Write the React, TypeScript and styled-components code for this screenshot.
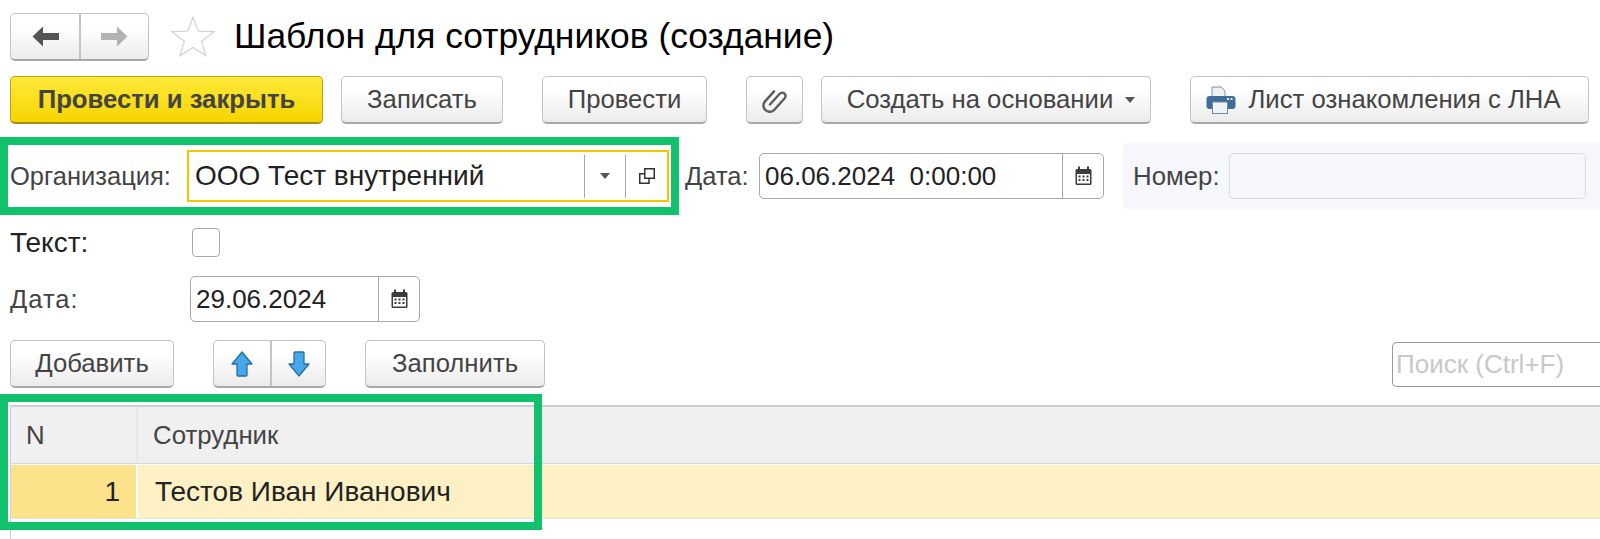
import React from "react";
import styled, { createGlobalStyle } from "styled-components";

const GlobalStyle = createGlobalStyle`
  html, body {
    margin: 0;
    padding: 0;
    background: #fff;
  }
  body {
    width: 1600px;
    height: 539px;
    overflow: hidden;
    font-family: "Liberation Sans", Arial, sans-serif;
    color: #333;
  }
`;

const Page = styled.div`
  display: flex;
  flex-direction: column;
  width: 1600px;
  height: 539px;
  overflow: hidden;
`;

const TitleRow = styled.div`
  display: flex;
  align-items: center;
  height: 47px;
  margin-top: 13px;
  padding-left: 10px;
`;

const Title = styled.h1`
  margin: 0 0 0 19px;
  font-size: 35.4px;
  font-weight: 400;
  color: #000;
  white-space: nowrap;
`;

const ButtonGroup = styled.div`
  display: flex;
  height: 48px;
  box-sizing: border-box;
  border: 1.5px solid #c4c4c4;
  border-bottom: 2px solid #a8a8a8;
  border-radius: 5px;
  background: linear-gradient(#ffffff 30%, #ebebeb);
  overflow: hidden;
`;

const GroupCell = styled.div<{ $w: number; $divided?: boolean }>`
  display: flex;
  align-items: center;
  justify-content: center;
  width: ${(p) => p.$w}px;
  border-left: ${(p) => (p.$divided ? "2px solid #c4c4c4" : "none")};
`;

const StarIcon = styled.svg`
  margin-left: 22px;
  flex: none;
`;

const ToolRow = styled.div`
  display: flex;
  gap: 39px;
  height: 48px;
  margin-top: 16px;
  padding-left: 10px;
`;

const Cluster = styled.div`
  display: flex;
  gap: 18px;
`;

const Button = styled.div<{ $w: number; $primary?: boolean; $pad?: string }>`
  display: flex;
  align-items: center;
  justify-content: center;
  gap: 12px;
  width: ${(p) => p.$w}px;
  height: 48px;
  box-sizing: border-box;
  padding: ${(p) => p.$pad || "0"};
  border: 1.5px solid ${(p) => (p.$primary ? "#c2a20c" : "#c4c4c4")};
  border-bottom: 2px solid ${(p) => (p.$primary ? "#a88c10" : "#a8a8a8")};
  border-radius: 5px;
  background: ${(p) =>
    p.$primary
      ? "linear-gradient(#ffe93a, #f5d500)"
      : "linear-gradient(#ffffff 30%, #ebebeb)"};
  font-size: 25.7px;
  font-weight: ${(p) => (p.$primary ? 700 : 400)};
  color: #444;
  white-space: nowrap;
`;

const FieldsRow = styled.div`
  display: flex;
  align-items: center;
  height: 78px;
  margin-top: 13px;
`;

const Highlight = styled.div`
  display: flex;
  align-items: center;
  width: 679px;
  height: 78px;
  box-sizing: border-box;
  border: 8px solid #11c16c;
  padding-left: 2px;
`;

const Label = styled.span<{ $w: number; $size?: number; $dark?: boolean; $spread?: number }>`
  flex: none;
  width: ${(p) => p.$w}px;
  font-size: ${(p) => p.$size || 25.5}px;
  color: ${(p) => (p.$dark ? "#222" : "#444")};
  letter-spacing: ${(p) => p.$spread || 0}px;
  white-space: nowrap;
`;

const OrgField = styled.div`
  display: flex;
  align-items: center;
  flex: 1;
  height: 52px;
  margin-right: 2px;
  box-sizing: border-box;
  border: 2px solid #f8c400;
  padding: 0 0 0 6px;
  font-size: 28px;
  color: #222;
`;

const FieldText = styled.span`
  flex: 1;
`;

const FieldButton = styled.div<{ $w: number }>`
  display: flex;
  align-items: center;
  justify-content: center;
  width: ${(p) => p.$w}px;
  height: 43px;
  border-left: 1.5px solid #a8a8a8;
`;

const DateBlock = styled.div`
  display: flex;
  align-items: center;
  margin-left: 6px;
`;

const DateField = styled.div<{ $w: number }>`
  display: flex;
  align-items: center;
  width: ${(p) => p.$w}px;
  height: 46px;
  box-sizing: border-box;
  border: 1.5px solid #a8a8a8;
  border-radius: 5px;
  padding-left: 5px;
  font-size: 26px;
  color: #222;
  white-space: pre;
`;

const DateButton = styled.div`
  display: flex;
  align-items: center;
  justify-content: center;
  align-self: stretch;
  width: 40px;
  border-left: 1.5px solid #a8a8a8;
`;

const NumberPanel = styled.div`
  display: flex;
  align-items: center;
  width: 477px;
  height: 66px;
  margin-left: 19px;
  padding-left: 10px;
  box-sizing: border-box;
  background: #f6f7fc;
`;

const NumberInput = styled.div`
  width: 357px;
  height: 46px;
  box-sizing: border-box;
  border: 1.5px solid #dcdcdc;
  border-radius: 5px;
`;

const FormRow = styled.div<{ $top: number; $h: number }>`
  display: flex;
  align-items: center;
  height: ${(p) => p.$h}px;
  margin-top: ${(p) => p.$top}px;
  padding-left: 10px;
`;

const Checkbox = styled.div`
  width: 28px;
  height: 29px;
  box-sizing: border-box;
  border: 1.5px solid #a8a8a8;
  border-radius: 4px;
  margin-left: 1px;
`;

const CommandRow = styled.div`
  display: flex;
  align-items: flex-start;
  gap: 39px;
  height: 48px;
  margin-top: 18px;
  padding-left: 10px;
`;

const Search = styled.div`
  display: flex;
  align-items: center;
  height: 45px;
  margin: 2px 0 0 auto;
  width: 208px;
  box-sizing: border-box;
  border: 1.5px solid #999;
  border-right: none;
  border-radius: 5px 0 0 5px;
  padding-left: 3px;
  font-size: 26px;
  color: #c8c8c8;
  white-space: nowrap;
`;

const GridWrap = styled.div`
  position: relative;
  margin: 17px 0 0 10px;
  flex: 1;
  border-left: 1.5px solid #d0d0d0;
`;

const GridHeader = styled.div`
  display: flex;
  height: 59px;
  box-sizing: border-box;
  border-top: 2px solid #cfcfcf;
  border-bottom: 1.5px solid #d8d8d8;
  background: #f0f0f0;
  font-size: 25.8px;
  color: #444;
`;

const GridRow = styled.div`
  display: flex;
  height: 54px;
  margin-top: 1px;
  box-sizing: border-box;
  border-bottom: 1.5px solid #e2e2e2;
  background: #fdf0c5;
  font-size: 28px;
  color: #222;
`;

const HeaderCell = styled.div<{ $w?: number }>`
  display: flex;
  align-items: center;
  width: ${(p) => (p.$w ? `${p.$w}px` : "auto")};
  padding-left: 15px;
  box-sizing: border-box;
  border-right: ${(p) => (p.$w ? "2px solid #e8e8e8" : "none")};
`;

const NumberCell = styled.div`
  display: flex;
  align-items: center;
  justify-content: flex-end;
  width: 127px;
  padding-right: 16px;
  box-sizing: border-box;
  background: #fde28c;
  border-right: 2px solid #fff;
`;

const NameCell = styled.div`
  display: flex;
  align-items: center;
  padding-left: 17px;
`;

const Annotation = styled.div`
  position: absolute;
  top: -11px;
  left: -11.5px;
  width: 542px;
  height: 136px;
  box-sizing: border-box;
  border: 8px solid #11c16c;
`;

const Arrow = ({ color, flip }: { color: string; flip?: boolean }) => (
  <svg width="27" height="21" viewBox="0 0 27 21" style={flip ? { transform: "scaleX(-1)" } : undefined}>
    <path d="M0.5 10.5 L11 0.5 V7 H27 V14 H11 V20.5 Z" fill={color} />
  </svg>
);

const VerticalArrow = ({ down }: { down?: boolean }) => (
  <svg width="22" height="26" viewBox="0 0 22 26" style={down ? { transform: "scaleY(-1)" } : undefined}>
    <path
      d="M11 1 L21 13 H16 V24 Q16 25 15 25 H7 Q6 25 6 24 V13 H1 Z"
      fill="#46a7ea"
      stroke="#24709f"
      strokeWidth="1.3"
      strokeLinejoin="round"
    />
  </svg>
);

const Caret = () => (
  <svg width="10" height="6" viewBox="0 0 10 6">
    <path d="M0 0 H10 L5 6 Z" fill="#555" />
  </svg>
);

const CalendarIcon = () => (
  <svg width="17" height="20" viewBox="0 0 17 20">
    <rect x="0.5" y="3" width="16" height="16" rx="1.5" fill="#3c3c3c" />
    <rect x="2" y="8" width="13" height="9.5" fill="#fff" />
    <rect x="3" y="0.5" width="2" height="4" fill="#3c3c3c" />
    <rect x="12" y="0.5" width="2" height="4" fill="#3c3c3c" />
    {[3.5, 7.5, 11.5].map((x) =>
      [9.5, 13].map((y) => <rect key={`${x}-${y}`} x={x} y={y} width="2" height="2" fill="#3c3c3c" />)
    )}
  </svg>
);

export default function App() {
  return (
    <Page>
      <GlobalStyle />
      <TitleRow>
        <ButtonGroup>
          <GroupCell $w={68}>
            <Arrow color="#555" />
          </GroupCell>
          <GroupCell $w={67} $divided>
            <Arrow color="#b2b2b2" flip />
          </GroupCell>
        </ButtonGroup>
        <StarIcon width="44" height="41" viewBox="0 0 46 42">
          <path
            d="M23 1 L28.5 15.5 L45 16 L32 26 L36.5 41 L23 32.5 L9.5 41 L14 26 L1 16 L17.5 15.5 Z"
            fill="#fff"
            stroke="#cfd3d8"
            strokeWidth="1.3"
          />
        </StarIcon>
        <Title>Шаблон для сотрудников (создание)</Title>
      </TitleRow>

      <ToolRow>
        <Cluster>
          <Button $w={313} $primary>
            Провести и закрыть
          </Button>
          <Button $w={162}>Записать</Button>
        </Cluster>
        <Button $w={165}>Провести</Button>
        <Cluster>
          <Button $w={57}>
            <svg width="27" height="27" viewBox="0 0 22 28">
              <g transform="rotate(42 11 14)">
                <path
                  d="M11 21 V6 a3.5 3.5 0 0 1 7 0 V22 a6.5 6.5 0 0 1 -13 0 V8"
                  fill="none"
                  stroke="#5c5c5c"
                  strokeWidth="2.5"
                  strokeLinecap="round"
                />
              </g>
            </svg>
          </Button>
          <Button $w={330} $pad="0 0 0 10px">
            Создать на основании
            <Caret />
          </Button>
        </Cluster>
        <Button $w={399} $pad="0 12px 0 0">
          <svg width="30" height="28" viewBox="0 0 30 28">
            <path d="M6 1 H15 L19 5 V12 H6 Z" fill="#eef1f5" stroke="#7f93a8" />
            <rect x="0.5" y="10" width="29" height="13" rx="3" fill="#3f6c98" />
            <rect x="21" y="12" width="2" height="2" fill="#dce8f2" />
            <rect x="24.5" y="12" width="2" height="2" fill="#dce8f2" />
            <rect x="6.5" y="16" width="15" height="11.5" fill="#eef2f6" stroke="#6f88a0" />
          </svg>
          Лист ознакомления с ЛНА
        </Button>
      </ToolRow>

      <FieldsRow>
        <Highlight>
          <Label $w={177}>Организация:</Label>
          <OrgField>
            <FieldText>ООО Тест внутренний</FieldText>
            <FieldButton $w={40}>
              <Caret />
            </FieldButton>
            <FieldButton $w={41}>
              <svg width="16" height="16" viewBox="0 0 16 16">
                <rect x="5.75" y="0.75" width="9.5" height="9.5" fill="#fff" stroke="#333" strokeWidth="1.5" />
                <path d="M5 5.75 H0.75 V15.25 H10 V11" fill="none" stroke="#333" strokeWidth="1.5" />
              </svg>
            </FieldButton>
          </OrgField>
        </Highlight>
        <DateBlock>
          <Label $w={74}>Дата:</Label>
          <DateField $w={345}>
            <FieldText>06.06.2024  0:00:00</FieldText>
            <DateButton>
              <CalendarIcon />
            </DateButton>
          </DateField>
        </DateBlock>
        <NumberPanel>
          <Label $w={96} $size={25.8}>Номер:</Label>
          <NumberInput />
        </NumberPanel>
      </FieldsRow>

      <FormRow $top={13} $h={29}>
        <Label $w={181} $size={28} $dark>Текст:</Label>
        <Checkbox />
      </FormRow>

      <FormRow $top={19} $h={46}>
        <Label $w={180} $spread={1}>Дата:</Label>
        <DateField $w={230}>
          <FieldText>29.06.2024</FieldText>
          <DateButton>
            <CalendarIcon />
          </DateButton>
        </DateField>
      </FormRow>

      <CommandRow>
        <Button $w={164}>Добавить</Button>
        <ButtonGroup>
          <GroupCell $w={56}>
            <VerticalArrow />
          </GroupCell>
          <GroupCell $w={53} $divided>
            <VerticalArrow down />
          </GroupCell>
        </ButtonGroup>
        <Button $w={180}>Заполнить</Button>
        <Search>Поиск (Ctrl+F)</Search>
      </CommandRow>

      <GridWrap>
        <GridHeader>
          <HeaderCell $w={127}>N</HeaderCell>
          <HeaderCell>Сотрудник</HeaderCell>
        </GridHeader>
        <GridRow>
          <NumberCell>1</NumberCell>
          <NameCell>Тестов Иван Иванович</NameCell>
        </GridRow>
        <Annotation />
      </GridWrap>
    </Page>
  );
}
